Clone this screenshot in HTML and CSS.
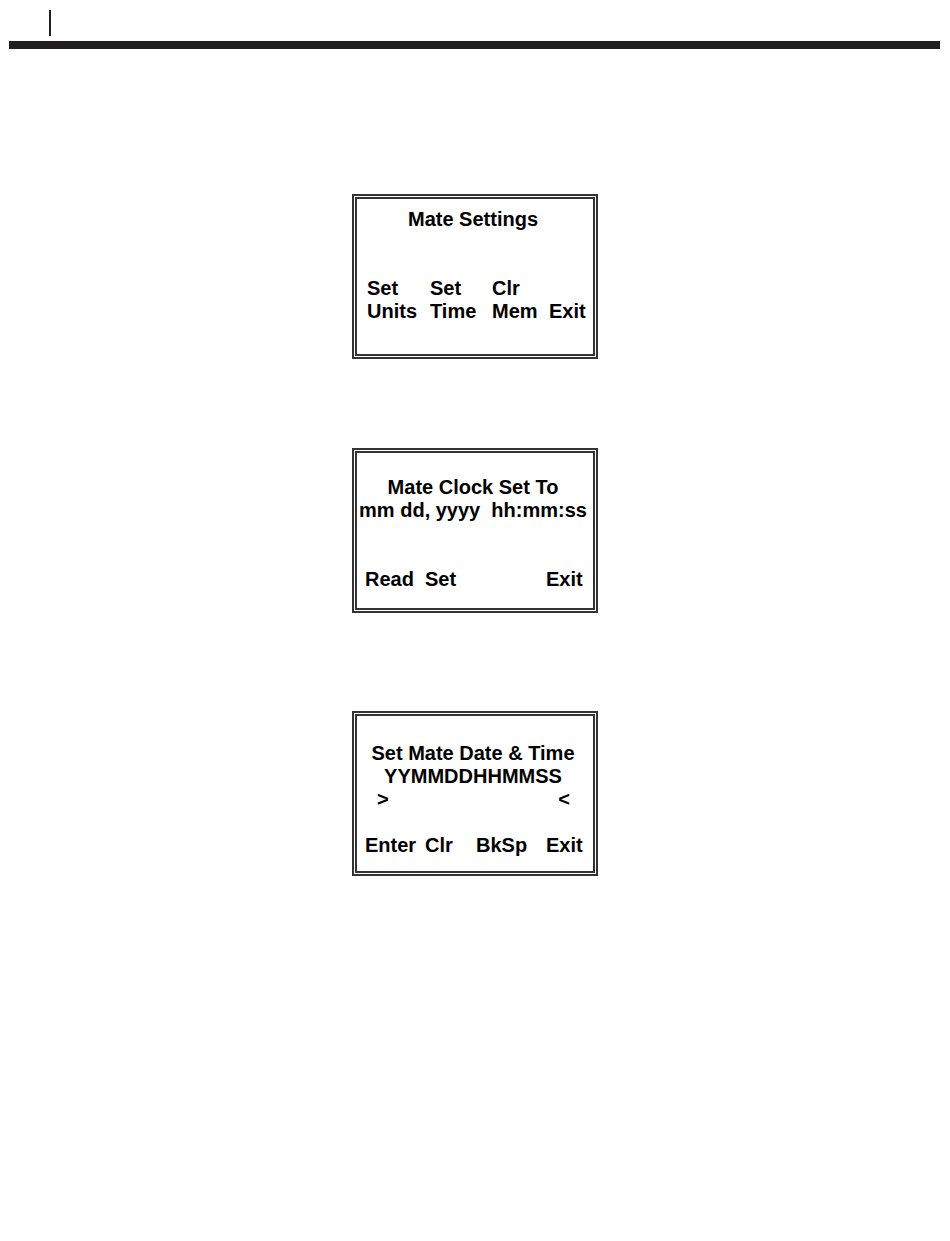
FILE: index.html
```html
<!DOCTYPE html>
<html lang="en">
<head>
<meta charset="utf-8">
<meta name="viewport" content="width=device-width, initial-scale=1">
<title>Mate Settings</title>
<link rel="stylesheet" href="styles.css">
</head>
<body>
<header class="page-header"><div class="header-mark"></div></header>
<main class="screens">
  <section class="screen screen-settings">
    <h2 class="line">Mate Settings</h2>
    <div class="keys keys-double">
      <button class="key" type="button">Set<br>Units</button>
      <button class="key" type="button">Set<br>Time</button>
      <button class="key" type="button">Clr<br>Mem</button>
      <button class="key" type="button">Exit</button>
    </div>
  </section>
  <section class="screen screen-clock">
    <h2 class="line">Mate Clock Set To</h2>
    <p class="line">mm dd, yyyy&nbsp; hh:mm:ss</p>
    <div class="keys">
      <button class="key" type="button">Read</button>
      <button class="key" type="button">Set</button>
      <button class="key key-last" type="button">Exit</button>
    </div>
  </section>
  <section class="screen screen-entry">
    <h2 class="line">Set Mate Date &amp; Time</h2>
    <label class="line" for="datetime">YYMMDDHHMMSS</label>
    <div class="entry">
      <span>&gt;</span>
      <input class="entry-input" id="datetime" type="text" maxlength="12">
      <span>&lt;</span>
    </div>
    <div class="keys">
      <button class="key" type="button">Enter</button>
      <button class="key" type="button">Clr</button>
      <button class="key" type="button">BkSp</button>
      <button class="key key-last" type="button">Exit</button>
    </div>
  </section>
</main>
</body>
</html>
```
FILE: styles.css
```css
* {
  box-sizing: border-box;
}

body {
  margin: 0;
  background: #fff;
  color: #000;
  font: bold 20px/23px "Liberation Sans", Arial, sans-serif;
}

.page-header {
  margin: 0 10px 0 9px;
  padding: 10px 0 5px 40px;
  border-bottom: 8px solid #231f20;
}

.header-mark {
  width: 2px;
  height: 26px;
  background: #231f20;
}

.screens {
  display: flex;
  flex-direction: column;
  align-items: center;
  padding: 145px 16px 32px;
}

.screen {
  display: flex;
  flex-direction: column;
  width: 100%;
  max-width: 246px;
  min-height: 165px;
  padding-right: 4px;
  border: 5px double #333;
}

.screen-settings {
  padding-top: 9px;
}

.screen-clock {
  margin-top: 89px;
  padding-top: 23px;
}

.screen-entry {
  margin-top: 98px;
  padding-top: 26px;
}

.line {
  margin: 0;
  font: inherit;
  text-align: center;
  white-space: nowrap;
}

.keys {
  display: grid;
  grid-template-columns: 60px 51px 70px auto;
  margin-top: 46px;
  padding-left: 8px;
}

.keys-double {
  grid-template-columns: 63px 62px 57px auto;
  align-items: end;
  padding-left: 10px;
}

.screen-entry .keys {
  margin-top: 23px;
}

.key {
  padding: 0;
  border: 0;
  background: none;
  color: inherit;
  font: inherit;
  text-align: left;
  white-space: nowrap;
}

.key-last {
  grid-column: 4;
}

.entry {
  display: flex;
  padding: 0 19px 0 20px;
}

.entry-input {
  flex: 1;
  min-width: 0;
  height: 23px;
  padding: 0;
  border: 0;
  outline: 0;
  background: none;
  color: inherit;
  font: inherit;
}
```
